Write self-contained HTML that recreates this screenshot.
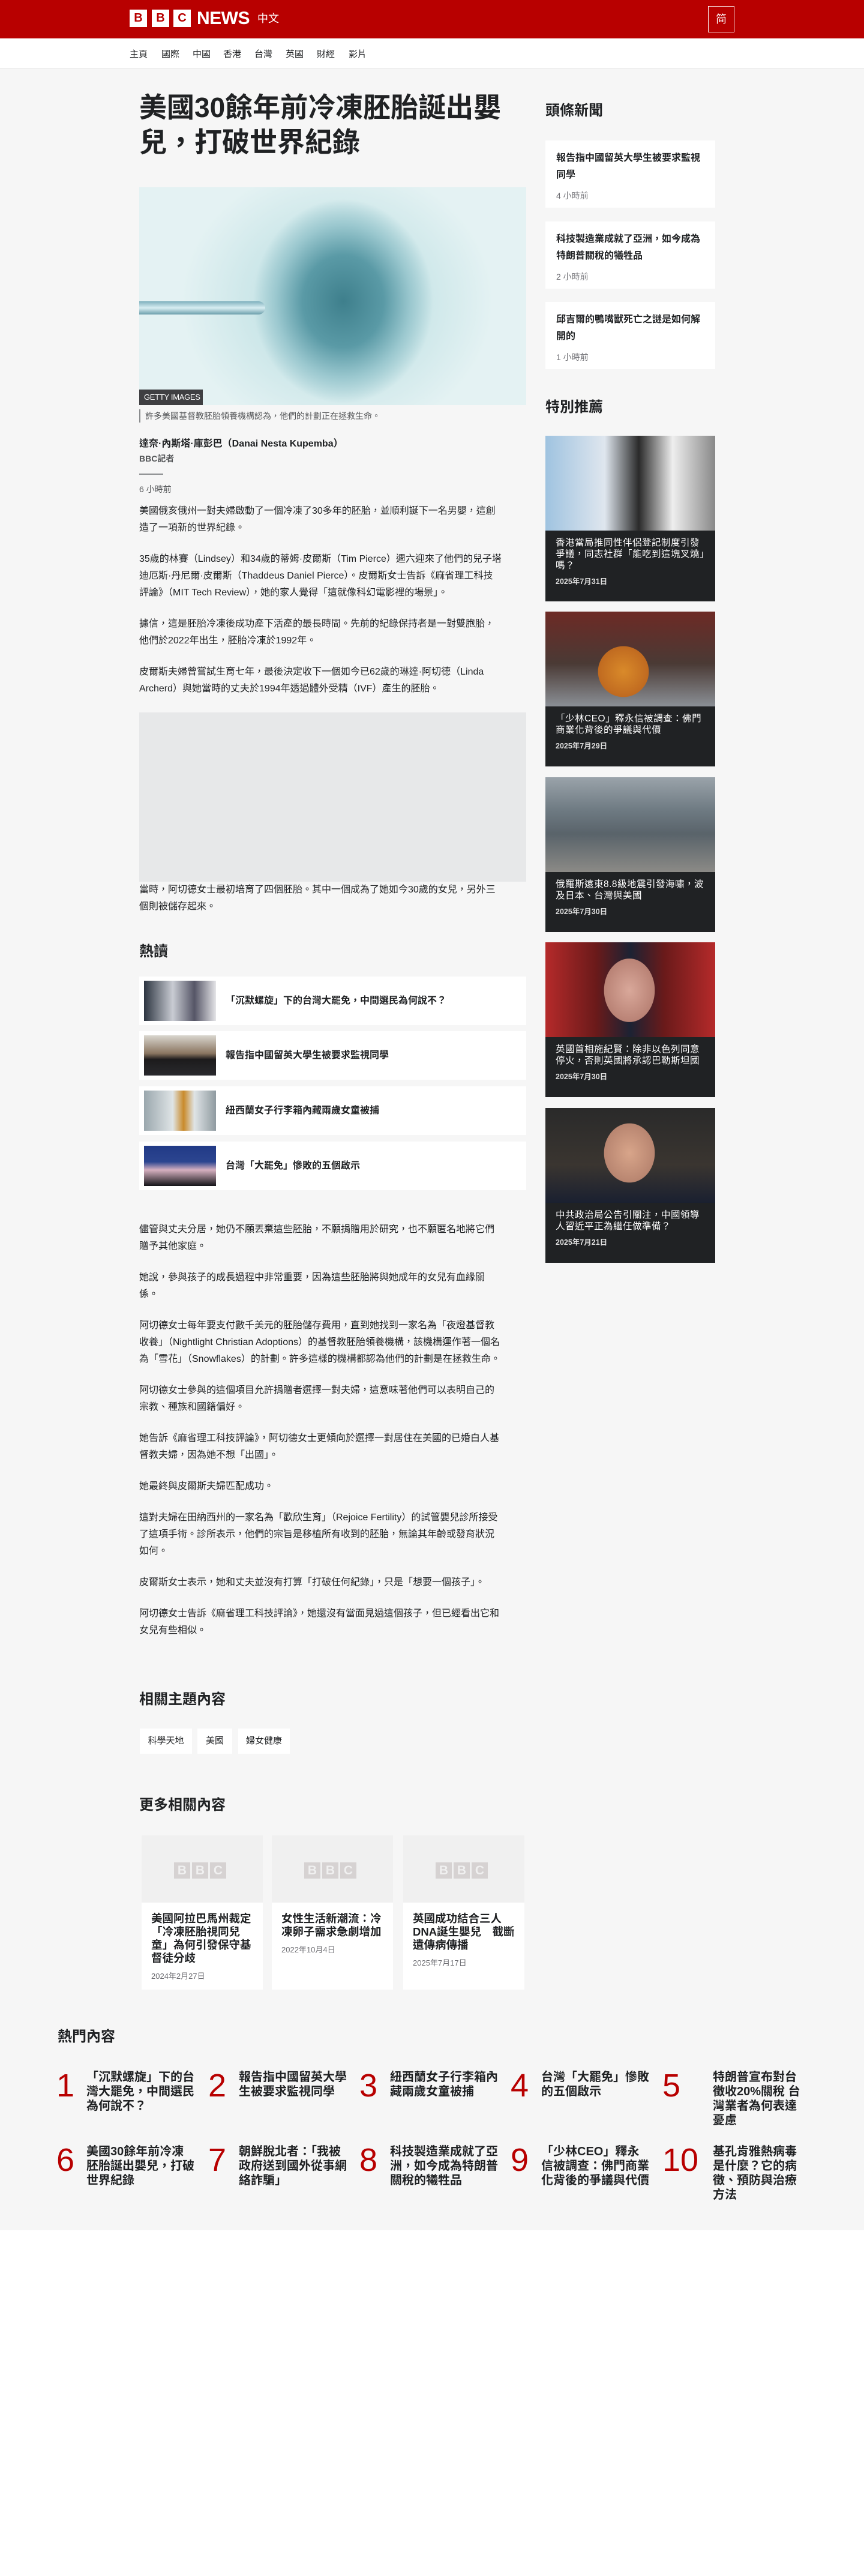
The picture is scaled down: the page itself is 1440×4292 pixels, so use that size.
<!DOCTYPE html>
<html><head><meta charset="utf-8">
<style>
*{margin:0;padding:0;box-sizing:border-box}
body{width:1440px;height:4292px;background:#fff;font-family:"Liberation Sans","Noto Sans CJK TC",sans-serif;color:#202224;position:relative;overflow:hidden}
.abs{position:absolute}
#hdr{left:0;top:0;width:1440px;height:64px;background:#b80000}
.blk{position:absolute;top:16px;width:29px;height:29px;background:#fff;color:#b80000;font-weight:bold;font-size:20px;line-height:29px;text-align:center}
#nav{left:0;top:64px;width:1440px;height:51px;background:#fff;border-bottom:1px solid #e6e6e6}
#nav span{position:absolute;top:15px;font-size:15px;color:#202224}
#gray{left:0;top:115px;width:1440px;height:3601px;background:#f6f6f6}
h1{position:absolute;left:232px;top:150px;width:650px;font-size:46px;line-height:58px;font-weight:bold}
.flow{position:absolute;left:232px;width:605px;font-size:16px;line-height:28px;color:#202224}
.flow p{margin-bottom:24px}
.h2{position:absolute;font-size:24px;font-weight:bold;line-height:30px}
.sc{position:absolute;left:909px;width:283px;background:#fff;padding:16px 18px}
.sc b{display:block;font-size:16px;line-height:28px}
.sc i{display:block;font-style:normal;font-size:14px;color:#6e6e73;margin-top:10px}
.fc{position:absolute;left:909px;width:283px;height:258px;background:#202224;color:#fff;overflow:hidden}
.fc .im{height:158px}
.fc b{display:block;font-weight:normal;font-size:15.5px;line-height:19px;padding:11px 17px 0;letter-spacing:0.5px}
.fc i{display:block;font-style:normal;font-size:12.5px;font-weight:bold;padding:6px 17px;color:#ddd}
.hr{position:absolute;left:232px;width:645px;height:81px;background:#fff}
.hr .t{position:absolute;left:8px;top:7px;width:120px;height:67px}
.hr b{position:absolute;left:144px;top:0;line-height:81px;font-size:16px}
.tag{position:absolute;top:2880px;height:42px;background:#fff;font-size:15px;line-height:42px;text-align:center}
.mc{position:absolute;top:3058px;width:202px;height:257px;background:#fff}
.mc .im{height:112px;background:#f0f0f0;position:relative}
.mc .lg{position:absolute;top:45px;left:54px}
.mc .lg span{display:inline-block;width:27px;height:27px;background:#d6d2d2;color:#f0f0f0;font-size:21px;line-height:27px;text-align:center;margin-right:3px;font-weight:bold}
.mc b{display:block;padding:16px 16px 0;font-size:18.5px;line-height:22px}
.mc i{display:block;padding:8px 16px;font-style:normal;font-size:13px;color:#6e6e73}
.pn{position:absolute;color:#b80000;font-size:54px;line-height:60px}
.pt{position:absolute;font-size:20px;font-weight:bold;line-height:24px;width:182px}
</style></head><body>
<div id="hdr" class="abs">
<div class="blk" style="left:216px">B</div><div class="blk" style="left:253px">B</div><div class="blk" style="left:289px">C</div>
<div class="abs" style="left:328px;top:13px;color:#fff;font-weight:bold;font-size:30px;line-height:36px;letter-spacing:-0.5px">NEWS</div>
<div class="abs" style="left:429px;top:19px;color:#fff;font-size:18px;line-height:24px">中文</div>
<div class="abs" style="left:1180px;top:10px;width:44px;height:44px;border:1px solid #fff;color:#fff;font-size:18px;line-height:42px;text-align:center">简</div>
</div>
<div id="nav" class="abs">
<span style="left:216px">主頁</span><span style="left:269px">國際</span><span style="left:321px">中國</span><span style="left:372px">香港</span><span style="left:424px">台灣</span><span style="left:476px">英國</span><span style="left:528px">財經</span><span style="left:581px">影片</span>
</div>
<div id="gray" class="abs"></div>

<h1>美國30餘年前冷凍胚胎誕出嬰兒，打破世界紀錄</h1>
<div class="abs" style="left:232px;top:312px;width:645px;height:363px;background:radial-gradient(ellipse 150px 170px at 340px 190px,#3e7f8c 0%,#5a9aa6 45%,#9bc8cf 75%,transparent 100%),radial-gradient(ellipse 260px 230px at 330px 190px,#b8dce0 0%,#cfe8ea 60%,#e4f2f3 100%);overflow:hidden">
<div class="abs" style="left:0;top:190px;width:210px;height:22px;background:linear-gradient(#7fb0bd,#d8eef2,#6c9eab);border-radius:0 12px 12px 0"></div>
<div class="abs" style="left:0;top:337px;width:106px;height:26px;background:#3f3f42;color:#fff;font-size:13px;line-height:26px;padding-left:8px;white-space:nowrap;letter-spacing:-0.3px">GETTY IMAGES</div>
</div>
<div class="abs" style="left:232px;top:682px;border-left:2px solid #8a8c8e;padding-left:8px;font-size:14px;line-height:22px;color:#545658">許多美國基督教胚胎領養機構認為，他們的計劃正在拯救生命。</div>
<div class="abs" style="left:232px;top:729px;font-size:16px;font-weight:bold;line-height:22px">達奈·內斯塔·庫彭巴（Danai Nesta Kupemba）</div>
<div class="abs" style="left:232px;top:754px;font-size:14px;font-weight:bold;line-height:20px;color:#545658">BBC記者</div>
<div class="abs" style="left:232px;top:789px;width:40px;height:2px;background:#8a8c8e"></div>
<div class="abs" style="left:232px;top:805px;font-size:14px;line-height:20px;color:#545658">6 小時前</div>

<div class="flow" style="top:838px">
<p>美國俄亥俄州一對夫婦啟動了一個冷凍了30多年的胚胎，並順利誕下一名男嬰，這創造了一項新的世界紀錄。</p>
<p>35歲的林賽（Lindsey）和34歲的蒂姆·皮爾斯（Tim Pierce）週六迎來了他們的兒子塔迪厄斯·丹尼爾·皮爾斯（Thaddeus Daniel Pierce）。皮爾斯女士告訴《麻省理工科技評論》（MIT Tech Review），她的家人覺得「這就像科幻電影裡的場景」。</p>
<p>據信，這是胚胎冷凍後成功產下活產的最長時間。先前的紀錄保持者是一對雙胞胎，他們於2022年出生，胚胎冷凍於1992年。</p>
<p>皮爾斯夫婦曾嘗試生育七年，最後決定收下一個如今已62歲的琳達·阿切德（Linda Archerd）與她當時的丈夫於1994年透過體外受精（IVF）產生的胚胎。</p>
</div>
<div class="abs" style="left:232px;top:1187px;width:645px;height:282px;background:#e7e8e9"></div>
<div class="flow" style="top:1469px"><p>當時，阿切德女士最初培育了四個胚胎。其中一個成為了她如今30歲的女兒，另外三個則被儲存起來。</p></div>

<div class="h2" style="left:232px;top:1571px">熱讀</div>
<div class="hr" style="top:1627px"><div class="t" style="background:linear-gradient(90deg,#2c3440,#c9ccd3 40%,#556 70%,#e5e5e8)"></div><b>「沉默螺旋」下的台灣大罷免，中間選民為何說不？</b></div>
<div class="hr" style="top:1718px"><div class="t" style="background:linear-gradient(#d9d6cf,#8a7560 45%,#1c1b1c 60%,#2a2a2e)"></div><b>報告指中國留英大學生被要求監視同學</b></div>
<div class="hr" style="top:1810px"><div class="t" style="background:linear-gradient(90deg,#9aa7ad,#dfe4e6 40%,#c98a2a 55%,#dfe4e6 70%,#8f9aa0)"></div><b>紐西蘭女子行李箱內藏兩歲女童被捕</b></div>
<div class="hr" style="top:1902px"><div class="t" style="background:linear-gradient(#213a86,#2c4590 40%,#d6b0c0 60%,#141418)"></div><b>台灣「大罷免」慘敗的五個啟示</b></div>

<div class="flow" style="top:2035px">
<p>儘管與丈夫分居，她仍不願丟棄這些胚胎，不願捐贈用於研究，也不願匿名地將它們贈予其他家庭。</p>
<p>她說，參與孩子的成長過程中非常重要，因為這些胚胎將與她成年的女兒有血緣關係。</p>
<p>阿切德女士每年要支付數千美元的胚胎儲存費用，直到她找到一家名為「夜燈基督教收養」（Nightlight Christian Adoptions）的基督教胚胎領養機構，該機構運作著一個名為「雪花」（Snowflakes）的計劃。許多這樣的機構都認為他們的計劃是在拯救生命。</p>
<p>阿切德女士參與的這個項目允許捐贈者選擇一對夫婦，這意味著他們可以表明自己的宗教、種族和國籍偏好。</p>
<p>她告訴《麻省理工科技評論》，阿切德女士更傾向於選擇一對居住在美國的已婚白人基督教夫婦，因為她不想「出國」。</p>
<p>她最終與皮爾斯夫婦匹配成功。</p>
<p>這對夫婦在田納西州的一家名為「歡欣生育」（Rejoice Fertility）的試管嬰兒診所接受了這項手術。診所表示，他們的宗旨是移植所有收到的胚胎，無論其年齡或發育狀況如何。</p>
<p>皮爾斯女士表示，她和丈夫並沒有打算「打破任何紀錄」，只是「想要一個孩子」。</p>
<p>阿切德女士告訴《麻省理工科技評論》，她還沒有當面見過這個孩子，但已經看出它和女兒有些相似。</p>
</div>

<div class="h2" style="left:232px;top:2817px">相關主題內容</div>
<div class="tag" style="left:233px;width:87px">科學天地</div>
<div class="tag" style="left:329px;width:58px">美國</div>
<div class="tag" style="left:397px;width:86px">婦女健康</div>

<div class="h2" style="left:232px;top:2993px">更多相關內容</div>
<div class="mc" style="left:236px"><div class="im"><div class="lg"><span>B</span><span>B</span><span>C</span></div></div><b>美國阿拉巴馬州裁定「冷凍胚胎視同兒童」為何引發保守基督徒分歧</b><i>2024年2月27日</i></div>
<div class="mc" style="left:453px"><div class="im"><div class="lg"><span>B</span><span>B</span><span>C</span></div></div><b>女性生活新潮流：冷凍卵子需求急劇增加</b><i>2022年10月4日</i></div>
<div class="mc" style="left:672px"><div class="im"><div class="lg"><span>B</span><span>B</span><span>C</span></div></div><b>英國成功結合三人DNA誕生嬰兒　截斷遺傳病傳播</b><i>2025年7月17日</i></div>

<div class="h2" style="left:909px;top:170px">頭條新聞</div>
<div class="sc" style="top:234px;height:112px"><b>報告指中國留英大學生被要求監視同學</b><i>4 小時前</i></div>
<div class="sc" style="top:369px;height:112px"><b>科技製造業成就了亞洲，如今成為特朗普關稅的犧牲品</b><i>2 小時前</i></div>
<div class="sc" style="top:503px;height:112px"><b>邱吉爾的鴨嘴獸死亡之謎是如何解開的</b><i>1 小時前</i></div>

<div class="h2" style="left:909px;top:664px">特別推薦</div>
<div class="fc" style="top:726px;height:276px"><div class="im" style="background:linear-gradient(90deg,#9fc3e0,#dfe6ee 35%,#2a2a2a 55%,#eee 75%,#888)"></div><b>香港當局推同性伴侶登記制度引發爭議，同志社群「能吃到這塊叉燒」嗎？</b><i>2025年7月31日</i></div>
<div class="fc" style="top:1019px"><div class="im" style="background:radial-gradient(ellipse 70px 70px at 130px 100px,#d98a2a,#c06a20 60%,transparent 61%),linear-gradient(#6d2a25,#4a3a35 55%,#8a8f95)"></div><b>「少林CEO」釋永信被調查：佛門商業化背後的爭議與代價</b><i>2025年7月29日</i></div>
<div class="fc" style="top:1295px"><div class="im" style="background:linear-gradient(#9aa3aa,#6e7a82 35%,#59636a 60%,#8b8a86)"></div><b>俄羅斯遠東8.8級地震引發海嘯，波及日本、台灣與美國</b><i>2025年7月30日</i></div>
<div class="fc" style="top:1570px"><div class="im" style="background:radial-gradient(ellipse 60px 75px at 140px 80px,#d9a89a,#b98275 70%,transparent 71%),linear-gradient(90deg,#b52a2a,#6a1a1a 30%,#1c2233 50%,#6a1a1a 70%,#b52a2a)"></div><b>英國首相施紀賢：除非以色列同意停火，否則英國將承認巴勒斯坦國</b><i>2025年7月30日</i></div>
<div class="fc" style="top:1846px"><div class="im" style="background:radial-gradient(ellipse 60px 70px at 140px 75px,#d8a58a,#b88570 70%,transparent 71%),linear-gradient(#2a2a2a,#3a3530 60%,#1a2030)"></div><b>中共政治局公告引關注，中國領導人習近平正為繼任做準備？</b><i>2025年7月21日</i></div>

<div class="h2" style="left:96px;top:3379px">熱門內容</div>
<div class="pn" style="left:94px;top:3445px">1</div><div class="pt" style="left:144px;top:3449px">「沉默螺旋」下的台灣大罷免，中間選民為何說不？</div>
<div class="pn" style="left:347px;top:3445px">2</div><div class="pt" style="left:398px;top:3449px">報告指中國留英大學生被要求監視同學</div>
<div class="pn" style="left:599px;top:3445px">3</div><div class="pt" style="left:650px;top:3449px">紐西蘭女子行李箱內藏兩歲女童被捕</div>
<div class="pn" style="left:851px;top:3445px">4</div><div class="pt" style="left:902px;top:3449px">台灣「大罷免」慘敗的五個啟示</div>
<div class="pn" style="left:1104px;top:3445px">5</div><div class="pt" style="left:1188px;top:3449px;width:150px">特朗普宣布對台徵收20%關稅 台灣業者為何表達憂慮</div>
<div class="pn" style="left:94px;top:3569px">6</div><div class="pt" style="left:144px;top:3573px">美國30餘年前冷凍胚胎誕出嬰兒，打破世界紀錄</div>
<div class="pn" style="left:347px;top:3569px">7</div><div class="pt" style="left:398px;top:3573px">朝鮮脫北者：「我被政府送到國外從事網絡詐騙」</div>
<div class="pn" style="left:599px;top:3569px">8</div><div class="pt" style="left:650px;top:3573px">科技製造業成就了亞洲，如今成為特朗普關稅的犧牲品</div>
<div class="pn" style="left:851px;top:3569px">9</div><div class="pt" style="left:902px;top:3573px">「少林CEO」釋永信被調查：佛門商業化背後的爭議與代價</div>
<div class="pn" style="left:1104px;top:3569px">10</div><div class="pt" style="left:1188px;top:3573px;width:150px">基孔肯雅熱病毒是什麼？它的病徵、預防與治療方法</div>
</body></html>
